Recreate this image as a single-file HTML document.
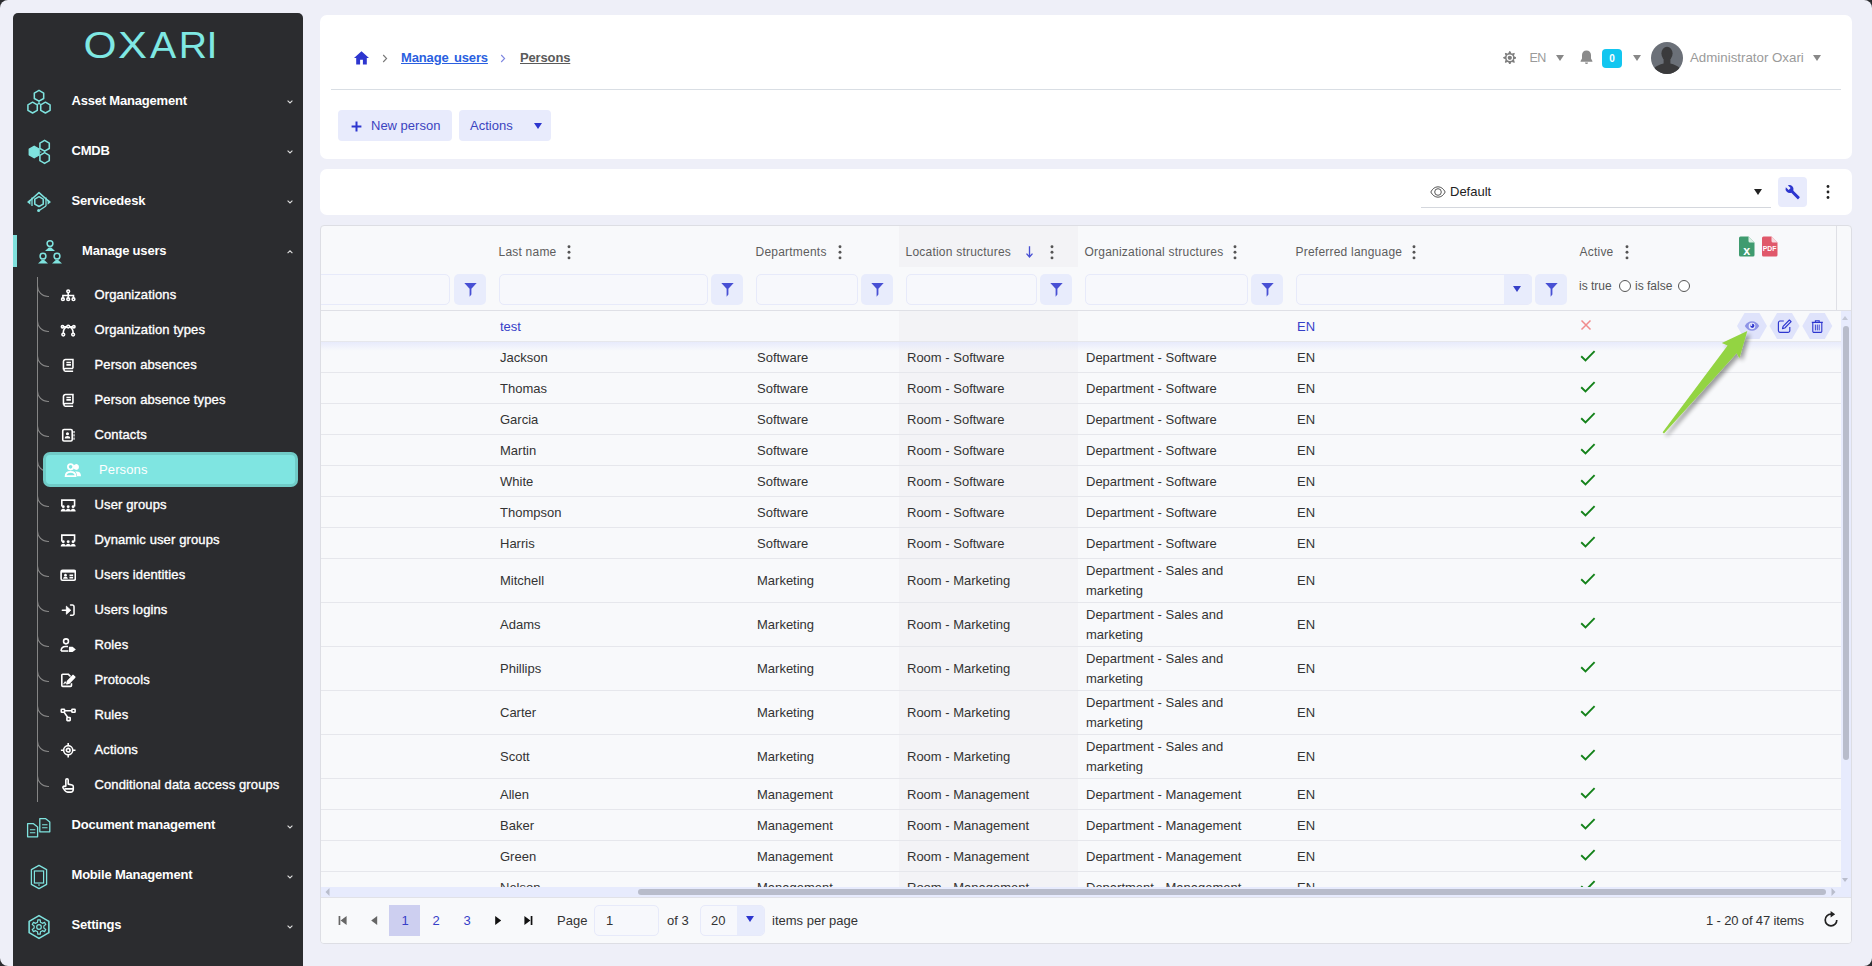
<!DOCTYPE html>
<html lang="en"><head><meta charset="utf-8"><title>Persons</title>
<style>
*{box-sizing:border-box;margin:0;padding:0}
html,body{width:1872px;height:966px;overflow:hidden}
body{background:#eeeff8;font-family:"Liberation Sans",sans-serif;font-size:13px;color:#333;position:relative}
.abs{position:absolute}
.frame{position:absolute;left:0;top:0;width:1872px;height:966px;border-radius:8px;box-shadow:0 0 0 30px #2b2c2f;pointer-events:none;z-index:50}
/* sidebar */
.sb{position:absolute;left:13px;top:13px;width:290px;height:953px;background:#2b2c2f;border-radius:5px 5px 0 0;color:#fff}
.logo{position:absolute;left:0;top:14px;width:290px;height:36px}
.top{position:absolute;left:0;width:290px;height:50px}
.top .ic{position:absolute;left:11px;top:10px;width:30px;height:30px}
.top .t{position:absolute;left:58.5px;top:1px;line-height:50px;font-weight:bold;font-size:13px;letter-spacing:-0.2px;white-space:nowrap}
.top .ch{position:absolute;left:273px;top:23.5px;width:8px;height:6px}
.top.open .ic{left:22px}
.top.open .t{left:69px}
.top.open:before{content:"";position:absolute;left:0;top:10px;width:4px;height:32px;background:#7fe0dc}
.sub{position:absolute;left:0;width:290px;height:35px}
.sub .cv{position:absolute;left:24px;top:8.5px;width:11.5px;height:11.5px;border-left:1px solid #858585;border-bottom:1px solid #858585;border-radius:0 0 0 12px}
.sub .ic{position:absolute;left:46.8px;top:9.6px;width:16.4px;height:16.4px}
.sub .t{position:absolute;left:81.5px;top:0;line-height:35px;font-size:13px;letter-spacing:.12px;white-space:nowrap;-webkit-text-stroke:0.35px #fff}
.sub.sel .box{position:absolute;left:30px;top:0;width:255px;height:35px;background:#7fe5e1;border:3px solid #70cbc7;border-radius:7px}
.sub.sel .t{left:86px;-webkit-text-stroke:0}
.sub.sel .ic{left:51px;top:9px;width:18px;height:18px}
.vline{position:absolute;left:24px;top:264px;width:1px;height:525px;background:#858585}

/* header panels */
.p1{position:absolute;left:320px;top:15px;width:1532px;height:144px;background:#fff;border-radius:7px}
.p2{position:absolute;left:320px;top:169px;width:1532px;height:46px;background:#fff;border-radius:7px}
.hr{position:absolute;left:11px;top:74px;width:1510px;height:1px;background:#d9dee4}
.bc{position:absolute;top:35px;word-spacing:2px;line-height:16px;font-size:13px;font-weight:bold;text-decoration:underline;white-space:nowrap;letter-spacing:-0.15px}
.btn{position:absolute;top:95px;height:31px;background:#e8ebfc;border-radius:4px;color:#3b44c0;font-size:13px;line-height:31px;white-space:nowrap}
.gray{color:#9a9a9a}
.tri{position:absolute;width:0;height:0;border-left:4.5px solid transparent;border-right:4.5px solid transparent;border-top:6px solid #888}
/* grid */
.grid{position:absolute;left:320px;top:225px;width:1532px;height:719px;background:#f8f9fb;border:1px solid #dddee4;border-radius:4px;overflow:hidden}
.grid>*{margin-left:-1px;margin-top:-1px}
.th{position:absolute;top:19px;line-height:16px;font-size:12px;color:#5d5d5d;white-space:nowrap;letter-spacing:.22px}
.fi{position:absolute;top:49px;height:31px;background:#f7f8fc;border:1px solid #e7eafa;border-radius:5px}
.fb{position:absolute;top:49px;width:32px;height:31px;background:#e8ecfc;border-radius:5px}
.radio{position:absolute;width:12px;height:12px;border:1px solid #555;border-radius:50%;background:#fff}
.body{position:absolute;left:0;top:86px;width:1521px;height:576px;overflow:hidden}
.row{position:absolute;left:0;width:1521px;border-bottom:1px solid #e6e7ec}
.row.first{z-index:2}
.row.first:after{content:"";position:absolute;left:0;top:31px;width:100%;height:9px;background:linear-gradient(rgba(226,230,252,.75),rgba(226,230,252,0))}
.c{position:absolute;top:1px;font-size:13px;color:#333;white-space:nowrap}
.c.lk{color:#3640c8}
.pg{position:absolute;line-height:16px;font-size:13px;color:#333;white-space:nowrap}
.top.lo .t{top:.3px}

</style></head>
<body>
<div class="sb">
<svg class="logo" viewBox="0 0 290 36" width="290" height="36"><text y="31" font-family="Liberation Sans, sans-serif" font-size="36.3" fill="#7fe8e3" stroke="#2b2c2f" stroke-width="0.9" paint-order="stroke"><tspan x="70.5" textLength="33" lengthAdjust="spacingAndGlyphs">O</tspan><tspan x="104.9" textLength="29" lengthAdjust="spacingAndGlyphs">X</tspan><tspan x="137" textLength="26.2" lengthAdjust="spacingAndGlyphs">A</tspan><tspan x="165.8" textLength="28.3" lengthAdjust="spacingAndGlyphs">R</tspan><tspan x="193.6" textLength="11" lengthAdjust="spacingAndGlyphs">I</tspan></text></svg>
<div class="top" style="top:62px"><svg class="ic" viewBox="0 0 30 30" width="30" height="30"><polygon points="15.00,5.40 10.32,8.10 10.32,13.50 15.00,16.20 19.68,13.50 19.68,8.10" fill="none" stroke="#7fe3df" stroke-width="1.55" stroke-linejoin="round"/><polygon points="8.60,17.20 3.92,19.90 3.92,25.30 8.60,28.00 13.28,25.30 13.28,19.90" fill="none" stroke="#7fe3df" stroke-width="1.55" stroke-linejoin="round"/><polygon points="21.40,17.20 16.72,19.90 16.72,25.30 21.40,28.00 26.08,25.30 26.08,19.90" fill="none" stroke="#7fe3df" stroke-width="1.55" stroke-linejoin="round"/><path d="M15 16.2v2.2M15 18.4l-1.8 1.2M15 18.4l1.8 1.2" stroke="#7fe3df" stroke-width="1.2" fill="none"/></svg><span class="t">Asset Management</span><svg class="ch" viewBox="0 0 8 6" width="8" height="6"><path d="M1.6 1.6L4 4l2.4-2.4" fill="none" stroke="#ddd" stroke-width="1.1"/></svg></div>
<div class="top" style="top:112px"><svg class="ic" viewBox="0 0 30 30" width="30" height="30"><polygon points="10.20,11.40 5.35,14.20 5.35,19.80 10.20,22.60 15.05,19.80 15.05,14.20" fill="#7fe3df" stroke="#7fe3df" stroke-width="1.55" stroke-linejoin="round"/><polygon points="20.60,5.40 15.92,8.10 15.92,13.50 20.60,16.20 25.28,13.50 25.28,8.10" fill="none" stroke="#7fe3df" stroke-width="1.55" stroke-linejoin="round"/><polygon points="20.60,17.60 15.92,20.30 15.92,25.70 20.60,28.40 25.28,25.70 25.28,20.30" fill="none" stroke="#7fe3df" stroke-width="1.55" stroke-linejoin="round"/><path d="M20.6 16.2v1.4M15.8 17h1.6" stroke="#7fe3df" stroke-width="1.2" fill="none"/></svg><span class="t">CMDB</span><svg class="ch" viewBox="0 0 8 6" width="8" height="6"><path d="M1.6 1.6L4 4l2.4-2.4" fill="none" stroke="#ddd" stroke-width="1.1"/></svg></div>
<div class="top" style="top:162px"><svg class="ic" viewBox="0 0 30 30" width="30" height="30"><path d="M4.5 17 L15 7.6 L25.5 17" fill="none" stroke="#7fe3df" stroke-width="1.5" stroke-linejoin="round"/><path d="M8 12.6 L8 21 M22 12.6 L22 21" fill="none" stroke="#7fe3df" stroke-width="1.3"/><path d="M3 17 L6.4 14.2 L6.4 19.8Z M27 17 L23.6 14.2 L23.6 19.8Z" fill="#7fe3df"/><polygon points="15.00,11.70 10.76,14.15 10.76,19.05 15.00,21.50 19.24,19.05 19.24,14.15" fill="none" stroke="#7fe3df" stroke-width="1.55" stroke-linejoin="round"/><path d="M22 21 L15.5 25.3" fill="none" stroke="#7fe3df" stroke-width="1.3"/><circle cx="14.6" cy="25.6" r="1.5" fill="#7fe3df"/></svg><span class="t">Servicedesk</span><svg class="ch" viewBox="0 0 8 6" width="8" height="6"><path d="M1.6 1.6L4 4l2.4-2.4" fill="none" stroke="#ddd" stroke-width="1.1"/></svg></div>
<div class="top open" style="top:212px"><svg class="ic" viewBox="0 0 30 30" width="30" height="30"><circle cx="15" cy="8.6" r="2.9" fill="none" stroke="#7fe3df" stroke-width="1.5"/><path d="M10 16 l3.8 -3.5 h2.4 l3.8 3.5z" fill="#7fe3df"/><circle cx="8" cy="21.2" r="2.9" fill="none" stroke="#7fe3df" stroke-width="1.5"/><path d="M3 28.6 l3.8 -3.5 h2.4 l3.8 3.5z" fill="#7fe3df"/><circle cx="22" cy="21.2" r="2.9" fill="none" stroke="#7fe3df" stroke-width="1.5"/><path d="M17 28.6 l3.8 -3.5 h2.4 l3.8 3.5z" fill="#7fe3df"/><path d="M15 15.4v1.6M8.2 18.2v-1.2h13.6v1.2" stroke="#7fe3df" stroke-width="0" fill="none"/></svg><span class="t">Manage users</span><svg class="ch" viewBox="0 0 8 6" width="8" height="6"><path d="M1.6 4.2L4 1.8l2.4 2.4" fill="none" stroke="#ddd" stroke-width="1.1"/></svg></div>
<div class="top lo" style="top:787px"><svg class="ic" viewBox="0 0 30 30" width="30" height="30"><path d="M3.6 13.6 h5.6 l4.4 3.4 v9.8 h-10z" fill="none" stroke="#7fe3df" stroke-width="1.3" stroke-linejoin="round"/><path d="M5.9 19.8 h5.4M5.9 22.8 h5.4" stroke="#7fe3df" stroke-width="1.1"/><path d="M15.8 8.6 h5.6 l4.4 3.4 v9.8 h-10z" fill="none" stroke="#7fe3df" stroke-width="1.3" stroke-linejoin="round"/><path d="M18.1 14.8 h5.4M18.1 17.8 h5.4" stroke="#7fe3df" stroke-width="1.1"/></svg><span class="t">Document management</span><svg class="ch" viewBox="0 0 8 6" width="8" height="6"><path d="M1.6 1.6L4 4l2.4-2.4" fill="none" stroke="#ddd" stroke-width="1.1"/></svg></div>
<div class="top lo" style="top:837px"><svg class="ic" viewBox="0 0 30 30" width="30" height="30"><polygon points="15,5.4 22.6,9.6 22.6,24.4 15,28.6 7.4,24.4 7.4,9.6" fill="none" stroke="#7fe3df" stroke-width="1.3" stroke-linejoin="round"/><rect x="10.4" y="11" width="9.2" height="12" fill="none" stroke="#7fe3df" stroke-width="1.2"/><path d="M14 25h2" stroke="#7fe3df" stroke-width="1.1"/></svg><span class="t">Mobile Management</span><svg class="ch" viewBox="0 0 8 6" width="8" height="6"><path d="M1.6 1.6L4 4l2.4-2.4" fill="none" stroke="#ddd" stroke-width="1.1"/></svg></div>
<div class="top lo" style="top:887px"><svg class="ic" viewBox="0 0 30 30" width="30" height="30"><polygon points="15.00,5.60 5.13,11.30 5.13,22.70 15.00,28.40 24.87,22.70 24.87,11.30" fill="none" stroke="#7fe3df" stroke-width="1.55" stroke-linejoin="round"/><polygon points="13.52,12.22 13.78,9.90 16.22,9.90 16.48,12.22 18.40,13.33 20.54,12.40 21.75,14.51 19.88,15.89 19.88,18.11 21.75,19.49 20.54,21.60 18.40,20.67 16.48,21.78 16.22,24.10 13.78,24.10 13.52,21.78 11.60,20.67 9.46,21.60 8.25,19.49 10.12,18.11 10.12,15.89 8.25,14.51 9.46,12.40 11.60,13.33" fill="none" stroke="#7fe3df" stroke-width="1.2" stroke-linejoin="round"/><circle cx="15" cy="17" r="2.3" fill="none" stroke="#7fe3df" stroke-width="1.2"/></svg><span class="t">Settings</span><svg class="ch" viewBox="0 0 8 6" width="8" height="6"><path d="M1.6 1.6L4 4l2.4-2.4" fill="none" stroke="#ddd" stroke-width="1.1"/></svg></div>
<div class="vline"></div>
<div class="sub" style="top:264px"><span class="cv"></span><svg class="ic" viewBox="0 0 18 18" width="18" height="18"><g fill="none" stroke="#fff" stroke-width="1.75"><circle cx="9" cy="4.800" r="1.500"/><circle cx="3.200" cy="13.400" r="1.500"/><circle cx="9" cy="13.400" r="1.500"/><circle cx="14.800" cy="13.400" r="1.500"/><path d="M9 6.400v5.400M3.200 11.800V9.400h11.600v2.400"/></g></svg><span class="t">Organizations</span></div>
<div class="sub" style="top:299px"><span class="cv"></span><svg class="ic" viewBox="0 0 18 18" width="18" height="18"><g fill="none" stroke="#fff" stroke-width="1.75"><circle cx="2.800" cy="5.200" r="1.300"/><circle cx="9" cy="5" r="1.500"/><circle cx="15.200" cy="5.200" r="1.300"/><circle cx="3.600" cy="13.800" r="1.500"/><circle cx="14.400" cy="13.800" r="1.500"/><path d="M4.100 5.200h3.400M10.500 5.200h3.400M3.600 12.200c0-3.600 1.700-6 4.200-6.600M14.400 12.200c0-3.600-1.700-6-4.200-6.600"/></g></svg><span class="t">Organization types</span></div>
<div class="sub" style="top:334px"><span class="cv"></span><svg class="ic" viewBox="0 0 18 18" width="18" height="18"><g fill="none" stroke="#fff" stroke-width="1.75"><path d="M14.2 12.4V2.8H6a2.2 2.2 0 0 0-2.2 2.2v8.6"/><path d="M14.4 12.6H5.8a1.5 1.5 0 0 0 0 3h8.6"/><path d="M7 6h5M7 8.6h5" stroke-width="1.8"/></g></svg><span class="t">Person absences</span></div>
<div class="sub" style="top:369px"><span class="cv"></span><svg class="ic" viewBox="0 0 18 18" width="18" height="18"><g fill="none" stroke="#fff" stroke-width="1.75"><path d="M14.2 12.4V2.8H6a2.2 2.2 0 0 0-2.2 2.2v8.6"/><path d="M14.4 12.6H5.8a1.5 1.5 0 0 0 0 3h8.6"/><path d="M7 6h5M7 8.6h5" stroke-width="1.8"/></g></svg><span class="t">Person absence types</span></div>
<div class="sub" style="top:404px"><span class="cv"></span><svg class="ic" viewBox="0 0 18 18" width="18" height="18"><g fill="none" stroke="#fff" stroke-width="1.75"><rect x="3" y="2.8" width="10.4" height="12.6" rx="1.4"/></g><circle cx="8.2" cy="7.4" r="1.7" fill="#fff"/><path d="M5.2 12.6c0-1.8 1.3-2.6 3-2.6s3 .8 3 2.6z" fill="#fff"/><path d="M15.4 4.4v2.4M15.4 8v2.4M15.4 11.6v2.4" stroke="#fff" stroke-width="1.3"/></svg><span class="t">Contacts</span></div>
<div class="sub sel" style="top:439px"><span class="cv"></span><span class="box"></span><svg class="ic" viewBox="0 0 18 18" width="18" height="18"><g fill="none" stroke="#fff" stroke-width="1.75"><circle cx="6.6" cy="5.8" r="2.7"/><path d="M1.6 15.2c0-3 2.2-4.4 5-4.4s5 1.4 5 4.4z"/></g><path d="M11.4 3a2.9 2.9 0 0 1 0 5.8 4.4 4.4 0 0 0 0-5.8z" fill="#fff"/><circle cx="12.2" cy="5.9" r="2.7" fill="#fff"/><path d="M12.6 10.4c2.6 0 4.4 1.4 4.4 4.8h-4c0-2-.6-3.6-2-4.6z" fill="#fff"/></svg><span class="t">Persons</span></div>
<div class="sub" style="top:474px"><span class="cv"></span><svg class="ic" viewBox="0 0 18 18" width="18" height="18"><g fill="none" stroke="#fff" stroke-width="1.75"><path d="M2 10.4V3.4h14v7"/></g><g fill="#fff"><circle cx="3.6" cy="10.6" r="1.6"/><circle cx="9" cy="10.6" r="1.6"/><circle cx="14.4" cy="10.6" r="1.6"/><path d="M.8 16c0-2.2 1.2-3.2 2.8-3.2s2.8 1 2.8 3.2zM6.2 16c0-2.2 1.2-3.2 2.8-3.2s2.8 1 2.8 3.2zM11.6 16c0-2.2 1.2-3.2 2.8-3.2s2.8 1 2.8 3.2z"/></g></svg><span class="t">User groups</span></div>
<div class="sub" style="top:509px"><span class="cv"></span><svg class="ic" viewBox="0 0 18 18" width="18" height="18"><g fill="none" stroke="#fff" stroke-width="1.75"><path d="M2 10.4V3.4h14v7"/></g><g fill="#fff"><circle cx="3.6" cy="10.6" r="1.6"/><circle cx="9" cy="10.6" r="1.6"/><circle cx="14.4" cy="10.6" r="1.6"/><path d="M.8 16c0-2.2 1.2-3.2 2.8-3.2s2.8 1 2.8 3.2zM6.2 16c0-2.2 1.2-3.2 2.8-3.2s2.8 1 2.8 3.2zM11.6 16c0-2.2 1.2-3.2 2.8-3.2s2.8 1 2.8 3.2z"/></g></svg><span class="t">Dynamic user groups</span></div>
<div class="sub" style="top:544px"><span class="cv"></span><svg class="ic" viewBox="0 0 18 18" width="18" height="18"><g fill="none" stroke="#fff" stroke-width="1.8"><rect x="1.2" y="3.6" width="15.6" height="11" rx="1.6"/></g><rect x="1.2" y="3.6" width="15.6" height="2.6" fill="#fff"/><circle cx="6" cy="9" r="1.5" fill="#fff"/><path d="M3.4 13c0-1.6 1.1-2.3 2.6-2.3s2.6.7 2.6 2.3z" fill="#fff"/><path d="M10.4 9h4M10.4 11.6h4" stroke="#fff" stroke-width="1.8"/></svg><span class="t">Users identities</span></div>
<div class="sub" style="top:579px"><span class="cv"></span><svg class="ic" viewBox="0 0 18 18" width="18" height="18"><g fill="none" stroke="#fff" stroke-width="1.7" stroke-linecap="round" stroke-linejoin="round"><path d="M11.600 3.400h2a1.800 1.800 0 0 1 1.800 1.800v7.600a1.800 1.800 0 0 1-1.800 1.800h-2"/><path d="M2.600 9h5"/></g><path d="M7 4.600L11.800 9 7 13.400z" fill="#fff" stroke="#fff" stroke-width="1" stroke-linejoin="round"/></svg><span class="t">Users logins</span></div>
<div class="sub" style="top:614px"><span class="cv"></span><svg class="ic" viewBox="0 0 18 18" width="18" height="18"><g fill="none" stroke="#fff" stroke-width="1.75"><circle cx="6.6" cy="4.8" r="2.7"/><path d="M1.2 15.4c0-3.4 2.2-5 5.2-5h2.4"/><path d="M1.2 15.4h8" /></g><path d="M9.8 10.6h4l3.6 3-3.6 3h-4z" fill="#fff"/></svg><span class="t">Roles</span></div>
<div class="sub" style="top:649px"><span class="cv"></span><svg class="ic" viewBox="0 0 18 18" width="18" height="18"><g fill="none" stroke="#fff" stroke-width="1.75" stroke-linejoin="round"><path d="M12.6 12.4v2.4a1 1 0 0 1-1 1H3a1 1 0 0 1-1-1V3.4a1 1 0 0 1 1-1h6l2.6 2.6"/><path d="M16.2 5.6l-6 6.4-2.6.8.7-2.7 6-6.3z" fill="#fff"/></g><path d="M4 13.4l1.6-2.4 1.2 1.6" stroke="#fff" stroke-width="1.2" fill="none"/></svg><span class="t">Protocols</span></div>
<div class="sub" style="top:684px"><span class="cv"></span><svg class="ic" viewBox="0 0 18 18" width="18" height="18"><g fill="none" stroke="#fff" stroke-width="1.75"><rect x="1.4" y="2.4" width="3.6" height="3.4" rx=".6"/><rect x="13" y="2.4" width="3.6" height="3.4" rx=".6"/><rect x="7.6" y="11.6" width="3.6" height="3.4" rx=".6"/><path d="M5 4.1h8M4.4 5.6l4.2 6"/></g></svg><span class="t">Rules</span></div>
<div class="sub" style="top:719px"><span class="cv"></span><svg class="ic" viewBox="0 0 18 18" width="18" height="18"><g fill="none" stroke="#fff" stroke-width="1.75"><circle cx="9" cy="9" r="5"/><path d="M9 1v3M9 14v3M1 9h3M14 9h3"/></g><circle cx="9" cy="9" r="2" fill="none" stroke="#fff" stroke-width="1.8"/></svg><span class="t">Actions</span></div>
<div class="sub" style="top:754px"><span class="cv"></span><svg class="ic" viewBox="0 0 18 18" width="18" height="18"><g fill="none" stroke="#fff" stroke-width="1.75" stroke-linejoin="round" stroke-linecap="round"><path d="M6.4 10V3.2a1.3 1.3 0 0 1 2.6 0v4.6l4.2 1a1.8 1.8 0 0 1 1.4 1.8v3.2a2.8 2.8 0 0 1-2.8 2.8H8.4a3.6 3.6 0 0 1-3-1.6L3.4 12a1.2 1.2 0 0 1 2-1.4z"/><path d="M5.8 13h8.6"/></g></svg><span class="t">Conditional data access groups</span></div>
</div>
<div class="p1">
 <svg class="abs" style="left:33px;top:35px" width="17" height="16" viewBox="0 0 17 16"><path d="M8.5 1.2L1 8h2.2v6.4h3.9V9.8h2.8v4.6h3.9V8H16z" fill="#2d36cf"/></svg>
 <svg class="abs" style="left:62px;top:38.5px" width="6" height="9" viewBox="0 0 6 9"><path d="M1.2 1l3.4 3.5L1.2 8" fill="none" stroke="#777" stroke-width="1.1"/></svg>
 <span class="bc" style="left:81px;color:#2a5fe0">Manage users</span>
 <svg class="abs" style="left:180px;top:38.5px" width="6" height="9" viewBox="0 0 6 9"><path d="M1.2 1l3.4 3.5L1.2 8" fill="none" stroke="#7d86e0" stroke-width="1.1"/></svg>
 <span class="bc" style="left:200px;color:#5a5a5a">Persons</span>

 <svg class="abs" style="left:1182.600px;top:35.800px" width="13.600" height="13.600" viewBox="-8 -8 16 16"><g fill="#7d7d7d" stroke="#7d7d7d" stroke-width="1.300" stroke-linejoin="round"><polygon points="-1.53,-4.34 0.00,-7.30 1.53,-4.34"/><polygon points="1.98,-4.15 5.16,-5.16 4.15,-1.98"/><polygon points="4.34,-1.53 7.30,-0.00 4.34,1.53"/><polygon points="4.15,1.98 5.16,5.16 1.98,4.15"/><polygon points="1.53,4.34 0.00,7.30 -1.53,4.34"/><polygon points="-1.98,4.15 -5.16,5.16 -4.15,1.98"/><polygon points="-4.34,1.53 -7.30,0.00 -4.34,-1.53"/><polygon points="-4.15,-1.98 -5.16,-5.16 -1.98,-4.15"/><circle r="4.500" fill="#fff"/></g><circle r="2.500" fill="#7d7d7d"/></svg>
 <span class="abs gray" style="left:1209.500px;top:35px;line-height:16px;font-size:12.500px;letter-spacing:-.6px">EN</span>
 <span class="tri" style="left:1236px;top:39.800px"></span>
 <svg class="abs" style="left:1259px;top:33.500px" width="15" height="16" viewBox="0 0 15 16"><path d="M7.5 1.4c-2.7 0-4.5 2-4.5 4.7v3.3L1.6 12v.7h11.8V12L12 9.400V6.100c0-2.700-1.800-4.700-4.500-4.700z" fill="#8a8a8a"/><path d="M6 13.600a1.500 1.500 0 0 0 3 0z" fill="#8a8a8a"/></svg>
 <span class="abs" style="left:1282px;top:34px;width:20px;height:19px;border-radius:4px;background:#12c6f0;color:#fff;font-size:10px;font-weight:bold;text-align:center;line-height:19px">0</span>
 <span class="tri" style="left:1313px;top:39.800px"></span>
 <svg class="abs" style="left:1331px;top:27px" width="32" height="32" viewBox="0 0 32 32"><defs><clipPath id="av"><circle cx="16" cy="16" r="16"/></clipPath></defs><circle cx="16" cy="16" r="16" fill="#6b7078"/><g clip-path="url(#av)" fill="#3a3a3c"><ellipse cx="16" cy="11.600" rx="5.600" ry="6.800"/><path d="M12.600 16h6.800v5.600c3.600 1 8 2.600 9.600 5v6H3v-6c1.600-2.400 6-4 9.600-5z"/></g></svg>
 <span class="abs gray" style="left:1370px;top:35px;line-height:16px;font-size:13.3px;white-space:nowrap">Administrator Oxari</span>
 <span class="tri" style="left:1493px;top:39.800px"></span>
 <div class="hr"></div>
 <div class="btn" style="left:18px;width:114px"><svg class="abs" style="left:12.500px;top:10.500px" width="11" height="11" viewBox="0 0 11 11"><path d="M5.500.600v9.800M.600 5.500h9.800" stroke="#2d36cf" stroke-width="2"/></svg><span class="abs" style="left:33px;top:0">New person</span></div>
 <div class="btn" style="left:139px;width:92px"><span class="abs" style="left:11px;top:0">Actions</span><span class="tri" style="left:75px;top:13px;border-top-color:#2d36cf;border-left-width:4px;border-right-width:4px;border-top-width:6px"></span></div>
</div>
<div class="p2">
 <div class="abs" style="left:1101px;top:38px;width:350px;height:1px;background:#d4d7dd"></div>
 <svg class="abs" style="left:1110px;top:16.5px" width="16" height="12" viewBox="0 0 16 12"><path d="M.800 6c1.600-3.200 4.200-5.200 7.200-5.200S13.600 2.800 15.200 6c-1.600 3.200-4.200 5.200-7.200 5.200S2.400 9.200.800 6z" fill="none" stroke="#555" stroke-width="1"/><circle cx="8" cy="6" r="3.300" fill="none" stroke="#555" stroke-width="1"/></svg>
 <span class="abs" style="left:1130px;top:15px;line-height:16px;font-size:13px;color:#222">Default</span>
 <span class="tri" style="left:1434px;top:20px;border-top-color:#222;border-left-width:4.500px;border-right-width:4.500px;border-top-width:6px"></span>
 <div class="abs" style="left:1458px;top:8px;width:29px;height:30px;border-radius:4px;background:#e8ebfc"><svg class="abs" style="left:6px;top:6px" width="17" height="17" viewBox="0 0 17 17"><path d="M15.500 13.800L9.400 7.700a4.300 4.300 0 0 0-5.600-5.400l2.800 2.800-1.900 1.900L1.800 4.300a4.300 4.300 0 0 0 5.500 5.500l6.100 6.100c.3.300.7.300 1 0l1.100-1.100c.3-.3.300-.700 0-1z" fill="#2d36cf"/></svg></div>
 <svg class="abs" style="left:1506px;top:15px" width="4" height="16" viewBox="0 0 4 16"><circle cx="2" cy="2.500" r="1.400" fill="#222"/><circle cx="2" cy="8" r="1.400" fill="#222"/><circle cx="2" cy="13.500" r="1.400" fill="#222"/></svg>
</div>
<div class="grid">
<div class="abs" style="left:579px;top:1px;width:179px;height:41px;background:#f3f3f6"></div>
<div class="abs" style="left:579px;top:86px;width:179px;height:576px;background:#f3f3f6"></div>
<span class="th" style="left:178.5px">Last name</span>
<svg class="abs" style="left:247px;top:20px" width="4" height="15" viewBox="0 0 4 15"><circle cx="2" cy="1.700" r="1.450" fill="#555"/><circle cx="2" cy="7.300" r="1.450" fill="#555"/><circle cx="2" cy="12.900" r="1.450" fill="#555"/></svg>
<span class="fi" style="left:179px;width:209px"></span>
<span class="fb" style="left:391px"><svg class="abs" style="left:9.500px;top:8.500px" width="13" height="14" viewBox="0 0 13 14"><path d="M.300 0h12.400L7.400 5.800v5.800L5.600 13.800V5.800z" fill="#4850d4"/></svg></span>
<span class="th" style="left:435.5px">Departments</span>
<svg class="abs" style="left:518px;top:20px" width="4" height="15" viewBox="0 0 4 15"><circle cx="2" cy="1.700" r="1.450" fill="#555"/><circle cx="2" cy="7.300" r="1.450" fill="#555"/><circle cx="2" cy="12.900" r="1.450" fill="#555"/></svg>
<span class="fi" style="left:436px;width:102px"></span>
<span class="fb" style="left:541px"><svg class="abs" style="left:9.500px;top:8.500px" width="13" height="14" viewBox="0 0 13 14"><path d="M.300 0h12.400L7.400 5.800v5.800L5.600 13.800V5.800z" fill="#4850d4"/></svg></span>
<span class="th" style="left:585.5px">Location structures</span>
<svg class="abs" style="left:730px;top:20px" width="4" height="15" viewBox="0 0 4 15"><circle cx="2" cy="1.700" r="1.450" fill="#555"/><circle cx="2" cy="7.300" r="1.450" fill="#555"/><circle cx="2" cy="12.900" r="1.450" fill="#555"/></svg>
<span class="fi" style="left:586px;width:131px"></span>
<span class="fb" style="left:720px"><svg class="abs" style="left:9.500px;top:8.500px" width="13" height="14" viewBox="0 0 13 14"><path d="M.300 0h12.400L7.400 5.800v5.800L5.600 13.800V5.800z" fill="#4850d4"/></svg></span>
<span class="th" style="left:764.5px">Organizational structures</span>
<svg class="abs" style="left:913px;top:20px" width="4" height="15" viewBox="0 0 4 15"><circle cx="2" cy="1.700" r="1.450" fill="#555"/><circle cx="2" cy="7.300" r="1.450" fill="#555"/><circle cx="2" cy="12.900" r="1.450" fill="#555"/></svg>
<span class="fi" style="left:765px;width:163px"></span>
<span class="fb" style="left:931px"><svg class="abs" style="left:9.500px;top:8.500px" width="13" height="14" viewBox="0 0 13 14"><path d="M.300 0h12.400L7.400 5.800v5.800L5.600 13.800V5.800z" fill="#4850d4"/></svg></span>
<span class="th" style="left:975.5px">Preferred language</span>
<svg class="abs" style="left:1092px;top:20px" width="4" height="15" viewBox="0 0 4 15"><circle cx="2" cy="1.700" r="1.450" fill="#555"/><circle cx="2" cy="7.300" r="1.450" fill="#555"/><circle cx="2" cy="12.900" r="1.450" fill="#555"/></svg>
<span class="fi" style="left:976px;width:236px"></span>
<span class="fb" style="left:1215px"><svg class="abs" style="left:9.500px;top:8.500px" width="13" height="14" viewBox="0 0 13 14"><path d="M.300 0h12.400L7.400 5.800v5.800L5.600 13.800V5.800z" fill="#4850d4"/></svg></span>
<span class="th" style="left:1259.5px">Active</span>
<svg class="abs" style="left:1305px;top:20px" width="4" height="15" viewBox="0 0 4 15"><circle cx="2" cy="1.700" r="1.450" fill="#555"/><circle cx="2" cy="7.300" r="1.450" fill="#555"/><circle cx="2" cy="12.900" r="1.450" fill="#555"/></svg>
<span class="fi" style="left:-20px;width:150px"></span>
<span class="fb" style="left:134px"><svg class="abs" style="left:9.500px;top:8.500px" width="13" height="14" viewBox="0 0 13 14"><path d="M.300 0h12.400L7.400 5.800v5.800L5.600 13.800V5.800z" fill="#4850d4"/></svg></span>
<svg class="abs" style="left:705px;top:21px" width="9" height="12" viewBox="0 0 9 12"><path d="M4.500.300v10.300M1.500 7.600l3 3.300 3-3.300" fill="none" stroke="#4850d4" stroke-width="1.350"/></svg>
<span class="abs" style="left:1184px;top:50px;width:28px;height:29px;background:#e8ecfc;border-radius:0 4px 4px 0"></span><span class="tri" style="left:1193px;top:61px;border-top-color:#3640c8;border-left-width:4.500px;border-right-width:4.500px;border-top-width:6px"></span>
<span class="abs" style="left:1259px;top:53px;line-height:16px;font-size:12px;color:#555;white-space:nowrap">is true</span>
<span class="radio" style="left:1299px;top:55px"></span>
<span class="abs" style="left:1315px;top:53px;line-height:16px;font-size:12px;color:#555;white-space:nowrap">is false</span>
<span class="radio" style="left:1358px;top:55px"></span>
<svg class="abs" style="left:1419px;top:11px" width="16" height="21" viewBox="1 0 16 21"><path d="M2.500 .500h8L16.500 6.500V19a1.500 1.500 0 0 1-1.500 1.500H2.500A1.500 1.500 0 0 1 1 19V2A1.500 1.500 0 0 1 2.500 .500z" fill="#3f9b6f"/><path d="M10.500.500v4.500a1.500 1.500 0 0 0 1.500 1.500h4.500z" fill="#d9efe4"/><text x="8.700" y="18.600" font-family="Liberation Sans, sans-serif" font-size="12.500" font-weight="bold" fill="#fff" text-anchor="middle">x</text></svg>
<svg class="abs" style="left:1442px;top:11px" width="16" height="21" viewBox="1 0 16 21"><path d="M2.500 .500h8L16.500 6.500V19a1.500 1.500 0 0 1-1.500 1.500H2.500A1.500 1.500 0 0 1 1 19V2A1.500 1.500 0 0 1 2.500 .500z" fill="#e0586a"/><path d="M10.500.500v4.500a1.500 1.500 0 0 0 1.500 1.500h4.500z" fill="#f8dadf"/><text x="8.500" y="15.200" font-family="Liberation Sans, sans-serif" font-size="7.200" font-weight="bold" fill="#fff" text-anchor="middle" textLength="13.600" lengthAdjust="spacingAndGlyphs">PDF</text></svg>
<div class="abs" style="left:0;top:85px;width:1531px;height:1px;background:#dfe0e6"></div>
<div class="abs" style="left:1516px;top:1px;width:1px;height:84px;background:#dfe0e6"></div>
<div class="body">
<div class="row first" style="top:0px;height:31px">
<span class="c lk" style="left:180px;line-height:30px">test</span>
<span class="c lk" style="left:977px;line-height:30px">EN</span>
<svg class="abs" style="left:1260px;top:8px" width="12" height="12" viewBox="0 0 12 12"><path d="M1.500 1.500l9 9M10.500 1.500l-9 9" fill="none" stroke="#f08c8c" stroke-width="1.500"/></svg>
</div>
<div class="row" style="top:31px;height:31px">
<span class="c" style="left:180px;line-height:30px">Jackson</span>
<span class="c" style="left:437px;line-height:30px">Software</span>
<span class="c" style="left:587px;line-height:30px">Room - Software</span>
<span class="c" style="left:766px;line-height:30px">Department - Software</span>
<span class="c" style="left:977px;line-height:30px">EN</span>
<svg class="abs" style="left:1260px;top:8px" width="16" height="12" viewBox="0 0 16 12"><path d="M1.200 6.200l4.300 4.200L14.600 1.200" fill="none" stroke="#14821a" stroke-width="1.900"/></svg>
</div>
<div class="row" style="top:62px;height:31px">
<span class="c" style="left:180px;line-height:30px">Thomas</span>
<span class="c" style="left:437px;line-height:30px">Software</span>
<span class="c" style="left:587px;line-height:30px">Room - Software</span>
<span class="c" style="left:766px;line-height:30px">Department - Software</span>
<span class="c" style="left:977px;line-height:30px">EN</span>
<svg class="abs" style="left:1260px;top:8px" width="16" height="12" viewBox="0 0 16 12"><path d="M1.200 6.200l4.300 4.200L14.600 1.200" fill="none" stroke="#14821a" stroke-width="1.900"/></svg>
</div>
<div class="row" style="top:93px;height:31px">
<span class="c" style="left:180px;line-height:30px">Garcia</span>
<span class="c" style="left:437px;line-height:30px">Software</span>
<span class="c" style="left:587px;line-height:30px">Room - Software</span>
<span class="c" style="left:766px;line-height:30px">Department - Software</span>
<span class="c" style="left:977px;line-height:30px">EN</span>
<svg class="abs" style="left:1260px;top:8px" width="16" height="12" viewBox="0 0 16 12"><path d="M1.200 6.200l4.300 4.200L14.600 1.200" fill="none" stroke="#14821a" stroke-width="1.900"/></svg>
</div>
<div class="row" style="top:124px;height:31px">
<span class="c" style="left:180px;line-height:30px">Martin</span>
<span class="c" style="left:437px;line-height:30px">Software</span>
<span class="c" style="left:587px;line-height:30px">Room - Software</span>
<span class="c" style="left:766px;line-height:30px">Department - Software</span>
<span class="c" style="left:977px;line-height:30px">EN</span>
<svg class="abs" style="left:1260px;top:8px" width="16" height="12" viewBox="0 0 16 12"><path d="M1.200 6.200l4.300 4.200L14.600 1.200" fill="none" stroke="#14821a" stroke-width="1.900"/></svg>
</div>
<div class="row" style="top:155px;height:31px">
<span class="c" style="left:180px;line-height:30px">White</span>
<span class="c" style="left:437px;line-height:30px">Software</span>
<span class="c" style="left:587px;line-height:30px">Room - Software</span>
<span class="c" style="left:766px;line-height:30px">Department - Software</span>
<span class="c" style="left:977px;line-height:30px">EN</span>
<svg class="abs" style="left:1260px;top:8px" width="16" height="12" viewBox="0 0 16 12"><path d="M1.200 6.200l4.300 4.200L14.600 1.200" fill="none" stroke="#14821a" stroke-width="1.900"/></svg>
</div>
<div class="row" style="top:186px;height:31px">
<span class="c" style="left:180px;line-height:30px">Thompson</span>
<span class="c" style="left:437px;line-height:30px">Software</span>
<span class="c" style="left:587px;line-height:30px">Room - Software</span>
<span class="c" style="left:766px;line-height:30px">Department - Software</span>
<span class="c" style="left:977px;line-height:30px">EN</span>
<svg class="abs" style="left:1260px;top:8px" width="16" height="12" viewBox="0 0 16 12"><path d="M1.200 6.200l4.300 4.200L14.600 1.200" fill="none" stroke="#14821a" stroke-width="1.900"/></svg>
</div>
<div class="row" style="top:217px;height:31px">
<span class="c" style="left:180px;line-height:30px">Harris</span>
<span class="c" style="left:437px;line-height:30px">Software</span>
<span class="c" style="left:587px;line-height:30px">Room - Software</span>
<span class="c" style="left:766px;line-height:30px">Department - Software</span>
<span class="c" style="left:977px;line-height:30px">EN</span>
<svg class="abs" style="left:1260px;top:8px" width="16" height="12" viewBox="0 0 16 12"><path d="M1.200 6.200l4.300 4.200L14.600 1.200" fill="none" stroke="#14821a" stroke-width="1.900"/></svg>
</div>
<div class="row" style="top:248px;height:44px">
<span class="c" style="left:180px;line-height:41px">Mitchell</span>
<span class="c" style="left:437px;line-height:41px">Marketing</span>
<span class="c" style="left:587px;line-height:41px">Room - Marketing</span>
<span class="c" style="left:766px;top:2px;line-height:20px">Department - Sales and<br>marketing</span>
<span class="c" style="left:977px;line-height:41px">EN</span>
<svg class="abs" style="left:1260px;top:14px" width="16" height="12" viewBox="0 0 16 12"><path d="M1.200 6.200l4.300 4.200L14.600 1.200" fill="none" stroke="#14821a" stroke-width="1.900"/></svg>
</div>
<div class="row" style="top:292px;height:44px">
<span class="c" style="left:180px;line-height:41px">Adams</span>
<span class="c" style="left:437px;line-height:41px">Marketing</span>
<span class="c" style="left:587px;line-height:41px">Room - Marketing</span>
<span class="c" style="left:766px;top:2px;line-height:20px">Department - Sales and<br>marketing</span>
<span class="c" style="left:977px;line-height:41px">EN</span>
<svg class="abs" style="left:1260px;top:14px" width="16" height="12" viewBox="0 0 16 12"><path d="M1.200 6.200l4.300 4.200L14.600 1.200" fill="none" stroke="#14821a" stroke-width="1.900"/></svg>
</div>
<div class="row" style="top:336px;height:44px">
<span class="c" style="left:180px;line-height:41px">Phillips</span>
<span class="c" style="left:437px;line-height:41px">Marketing</span>
<span class="c" style="left:587px;line-height:41px">Room - Marketing</span>
<span class="c" style="left:766px;top:2px;line-height:20px">Department - Sales and<br>marketing</span>
<span class="c" style="left:977px;line-height:41px">EN</span>
<svg class="abs" style="left:1260px;top:14px" width="16" height="12" viewBox="0 0 16 12"><path d="M1.200 6.200l4.300 4.200L14.600 1.200" fill="none" stroke="#14821a" stroke-width="1.900"/></svg>
</div>
<div class="row" style="top:380px;height:44px">
<span class="c" style="left:180px;line-height:41px">Carter</span>
<span class="c" style="left:437px;line-height:41px">Marketing</span>
<span class="c" style="left:587px;line-height:41px">Room - Marketing</span>
<span class="c" style="left:766px;top:2px;line-height:20px">Department - Sales and<br>marketing</span>
<span class="c" style="left:977px;line-height:41px">EN</span>
<svg class="abs" style="left:1260px;top:14px" width="16" height="12" viewBox="0 0 16 12"><path d="M1.200 6.200l4.300 4.200L14.600 1.200" fill="none" stroke="#14821a" stroke-width="1.900"/></svg>
</div>
<div class="row" style="top:424px;height:44px">
<span class="c" style="left:180px;line-height:41px">Scott</span>
<span class="c" style="left:437px;line-height:41px">Marketing</span>
<span class="c" style="left:587px;line-height:41px">Room - Marketing</span>
<span class="c" style="left:766px;top:2px;line-height:20px">Department - Sales and<br>marketing</span>
<span class="c" style="left:977px;line-height:41px">EN</span>
<svg class="abs" style="left:1260px;top:14px" width="16" height="12" viewBox="0 0 16 12"><path d="M1.200 6.200l4.300 4.200L14.600 1.200" fill="none" stroke="#14821a" stroke-width="1.900"/></svg>
</div>
<div class="row" style="top:468px;height:31px">
<span class="c" style="left:180px;line-height:30px">Allen</span>
<span class="c" style="left:437px;line-height:30px">Management</span>
<span class="c" style="left:587px;line-height:30px">Room - Management</span>
<span class="c" style="left:766px;line-height:30px">Department - Management</span>
<span class="c" style="left:977px;line-height:30px">EN</span>
<svg class="abs" style="left:1260px;top:8px" width="16" height="12" viewBox="0 0 16 12"><path d="M1.200 6.200l4.300 4.200L14.600 1.200" fill="none" stroke="#14821a" stroke-width="1.900"/></svg>
</div>
<div class="row" style="top:499px;height:31px">
<span class="c" style="left:180px;line-height:30px">Baker</span>
<span class="c" style="left:437px;line-height:30px">Management</span>
<span class="c" style="left:587px;line-height:30px">Room - Management</span>
<span class="c" style="left:766px;line-height:30px">Department - Management</span>
<span class="c" style="left:977px;line-height:30px">EN</span>
<svg class="abs" style="left:1260px;top:8px" width="16" height="12" viewBox="0 0 16 12"><path d="M1.200 6.200l4.300 4.200L14.600 1.200" fill="none" stroke="#14821a" stroke-width="1.900"/></svg>
</div>
<div class="row" style="top:530px;height:31px">
<span class="c" style="left:180px;line-height:30px">Green</span>
<span class="c" style="left:437px;line-height:30px">Management</span>
<span class="c" style="left:587px;line-height:30px">Room - Management</span>
<span class="c" style="left:766px;line-height:30px">Department - Management</span>
<span class="c" style="left:977px;line-height:30px">EN</span>
<svg class="abs" style="left:1260px;top:8px" width="16" height="12" viewBox="0 0 16 12"><path d="M1.200 6.200l4.300 4.200L14.600 1.200" fill="none" stroke="#14821a" stroke-width="1.900"/></svg>
</div>
<div class="row" style="top:561px;height:31px">
<span class="c" style="left:180px;line-height:30px">Nelson</span>
<span class="c" style="left:437px;line-height:30px">Management</span>
<span class="c" style="left:587px;line-height:30px">Room - Management</span>
<span class="c" style="left:766px;line-height:30px">Department - Management</span>
<span class="c" style="left:977px;line-height:30px">EN</span>
<svg class="abs" style="left:1260px;top:8px" width="16" height="12" viewBox="0 0 16 12"><path d="M1.200 6.200l4.300 4.200L14.600 1.200" fill="none" stroke="#14821a" stroke-width="1.900"/></svg>
</div>
</div><svg class="abs" style="left:1415px;top:86px;z-index:3" width="100" height="30" viewBox="1735 311 100 30">
<polygon points="1737.0,326.0 1744.5,313.0 1759.5,313.0 1767.0,326.0 1759.5,339.0 1744.5,339.0" fill="#dfe3fb"/>
<polygon points="1769.5,326.0 1777.0,313.0 1792.0,313.0 1799.5,326.0 1792.0,339.0 1777.0,339.0" fill="#dfe3fb"/>
<polygon points="1802.3,326.0 1809.8,313.0 1824.8,313.0 1832.3,326.0 1824.8,339.0 1809.8,339.0" fill="#dfe3fb"/>
<path d="M1744.800 326c1.800-3.200 4.200-4.700 7.200-4.700s5.400 1.500 7.200 4.700c-1.800 3.200-4.200 4.700-7.200 4.700s-5.400-1.500-7.200-4.700z" fill="#8d93e6"/><circle cx="1752" cy="326" r="3.300" fill="#e9ebfd"/><circle cx="1752.300" cy="325.800" r="2.100" fill="#2d36cf"/><circle cx="1751.300" cy="324.900" r="1" fill="#e9ebfd"/>
<g fill="none" stroke="#2d36cf" stroke-width="1.150" stroke-linejoin="round"><path d="M1783.800 321h-3.600a1.800 1.800 0 0 0-1.800 1.800v7.800a1.800 1.800 0 0 0 1.800 1.800h7.800a1.800 1.800 0 0 0 1.800-1.800v-3.600"/><path d="M1789.400 320l1.700 1.700-6.300 6.300-2.300.600.600-2.300z"/></g>
<g fill="none" stroke="#2d36cf" stroke-width="1.100"><path d="M1811.800 322.400h11M1815.400 322.400v-1.600h3.800v1.600"/><path d="M1812.800 322.400v8.800a1.200 1.200 0 0 0 1.200 1.200h6.600a1.200 1.200 0 0 0 1.200-1.200v-8.800"/><path d="M1815.400 324.600v5.800M1817.300 324.600v5.800M1819.200 324.600v5.800" stroke-width=".900"/></g>
</svg>
<div class="abs" style="left:1521px;top:86px;width:11px;height:576px;background:#e7ebfd"></div>
<div class="tri" style="left:1522px;top:91px;border-left-width:3.500px;border-right-width:3.500px;border-top:0;border-bottom:4px solid #c3c7d6"></div>
<div class="abs" style="left:1523px;top:101px;width:6px;height:434px;background:#b8bccb;border-radius:3px"></div>
<div class="tri" style="left:1522px;top:653px;border-left-width:3.500px;border-right-width:3.500px;border-top:4px solid #b9bdcc"></div>
<div class="abs" style="left:0;top:662px;width:1532px;height:10px;background:#e7ebfd"></div>
<div class="abs" style="left:318px;top:664px;width:1188px;height:6px;background:#b8bccb;border-radius:3px"></div>
<svg class="abs" style="left:5px;top:663px" width="5" height="8" viewBox="0 0 5 8"><path d="M4.500 0v8L.500 4z" fill="#b9bdcc"/></svg>
<svg class="abs" style="left:1511px;top:663px" width="5" height="8" viewBox="0 0 5 8"><path d="M.500 0v8L4.500 4z" fill="#b9bdcc"/></svg>
<div class="abs" style="left:0;top:672px;width:1532px;height:48px;background:#f8f9fb;border-top:1px solid #e1e2e8"></div>
<svg class="abs" style="left:18px;top:691px" width="9" height="9" viewBox="0 0 9 9"><path d="M.600 0h1.700v9H.600zM8.600 0v9L2.600 4.500z" fill="#666"/></svg>
<svg class="abs" style="left:50px;top:691px" width="9" height="9" viewBox="0 0 9 9"><path d="M7.200 0v9L1.200 4.500z" fill="#666"/></svg>
<svg class="abs" style="left:174px;top:691px" width="9" height="9" viewBox="0 0 9 9"><path d="M1.200 0v9L7.200 4.500z" fill="#111"/></svg>
<svg class="abs" style="left:204px;top:691px" width="9" height="9" viewBox="0 0 9 9"><path d="M6.700 0h1.700v9H6.700zM.400 0v9L6.400 4.500z" fill="#111"/></svg>
<span class="abs" style="left:69px;top:680px;width:31px;height:31px;background:#cdcff0"></span>
<span class="pg" style="left:70px;top:688px;color:#3640c8;width:30px;text-align:center">1</span>
<span class="pg" style="left:101px;top:688px;color:#3640c8;width:30px;text-align:center">2</span>
<span class="pg" style="left:132px;top:688px;color:#3640c8;width:30px;text-align:center">3</span>
<span class="pg" style="left:237px;top:688px">Page</span>
<span class="abs" style="left:274px;top:680px;width:65px;height:31px;border:1px solid #e7eafa;border-radius:5px;background:#f7f8fc"></span>
<span class="pg" style="left:286px;top:688px">1</span>
<span class="pg" style="left:347px;top:688px">of 3</span>
<span class="abs" style="left:380px;top:680px;width:65px;height:31px;border:1px solid #e7eafa;border-radius:5px;background:#f7f8fc"></span>
<span class="abs" style="left:417px;top:681px;width:27px;height:29px;background:#e8ecfc;border-radius:0 4px 4px 0"></span>
<span class="tri" style="left:426px;top:691px;border-top-color:#2d36cf;border-left-width:4.500px;border-right-width:4.500px;border-top-width:6.500px"></span>
<span class="pg" style="left:391px;top:688px">20</span>
<span class="pg" style="left:452px;top:688px">items per page</span>
<span class="pg" style="left:1386px;top:688px;letter-spacing:-.15px">1 - 20 of 47 items</span>
<svg class="abs" style="left:1503px;top:686px" width="16" height="17" viewBox="0 0 16 17"><path d="M8 3.200a5.800 5.800 0 1 0 5.800 5.800" fill="none" stroke="#222" stroke-width="1.700"/><path d="M7.600 0l4.600 3.200-4.600 3.200z" fill="#222"/></svg>
</div>
<svg class="abs" style="left:1640px;top:315px;z-index:20" width="140" height="140" viewBox="1640 315 140 140"><defs><filter id="ash" x="-20%" y="-20%" width="150%" height="150%"><feGaussianBlur in="SourceAlpha" stdDeviation="2.200"/><feOffset dx="2.500" dy="2.500"/><feComponentTransfer><feFuncA type="linear" slope=".380"/></feComponentTransfer><feMerge><feMergeNode/><feMergeNode in="SourceGraphic"/></feMerge></filter></defs><polygon filter="url(#ash)" points="1662.600,432.300 1727.600,345.500 1721.800,343.100 1747.300,330.900 1739.400,358.300 1736.600,353.300 1664,433.600" fill="#93d442"/></svg>
<div class="frame"></div>
</body></html>
